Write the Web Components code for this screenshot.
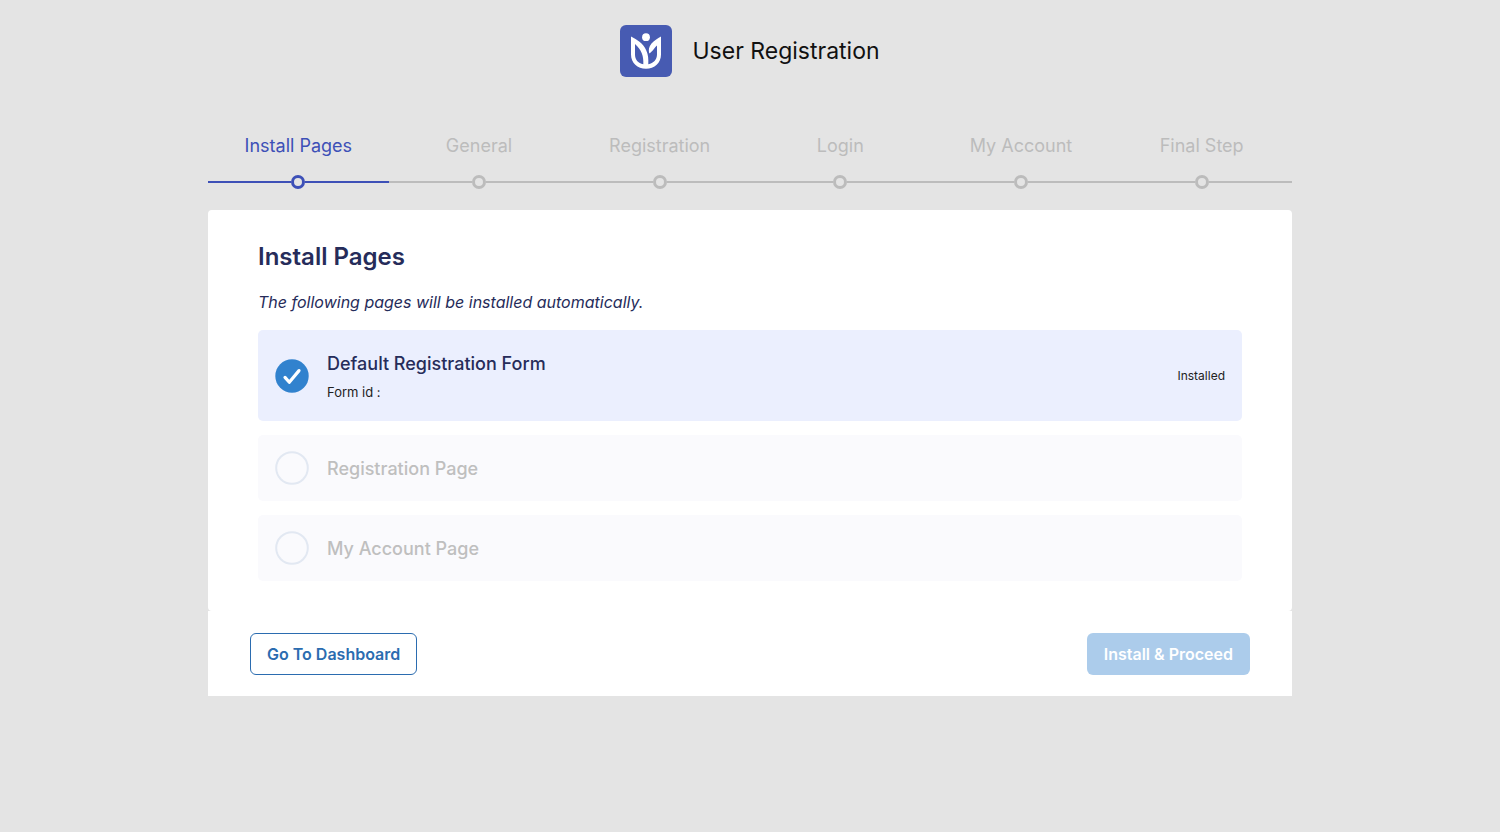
<!DOCTYPE html>
<html lang="en">
<head>
<meta charset="utf-8">
<meta name="viewport" content="width=device-width, initial-scale=1">
<title>User Registration</title>
<style>
  body {
    margin: 0;
    background: #e4e4e4;
    font-family: Inter, "Liberation Sans", sans-serif;
    --brand: #475bb2;
    --active: #3d50b7;
    --muted: #bcbcbc;
    --ink: #262c5a;
    --link: #2b6cb0;
  }
</style>
</head>
<body>
<setup-wizard>
  <brand-header slot="header">User Registration</brand-header>
  <step-list slot="steps">
    <step-item active>Install Pages</step-item>
    <step-item>General</step-item>
    <step-item>Registration</step-item>
    <step-item>Login</step-item>
    <step-item>My Account</step-item>
    <step-item>Final Step</step-item>
  </step-list>
  <install-panel>
    <span slot="title">Install Pages</span>
    <span slot="description">The following pages will be installed automatically.</span>
    <page-row done>Default Registration Form<span slot="detail">Form id :</span><span slot="status">Installed</span></page-row>
    <page-row>Registration Page</page-row>
    <page-row>My Account Page</page-row>
  </install-panel>
  <wizard-actions slot="actions">
    <wizard-button variant="outline">Go To Dashboard</wizard-button>
    <wizard-button disabled>Install &amp; Proceed</wizard-button>
  </wizard-actions>
</setup-wizard>

<script>
const define = (name, html, setup) => {
  const template = document.createElement('template');
  template.innerHTML = html;
  customElements.define(name, class extends HTMLElement {
    constructor() {
      super();
      this.attachShadow({ mode: 'open' }).append(template.content.cloneNode(true));
    }
    connectedCallback() { if (setup) setup(this, this.shadowRoot); }
  });
};

define('setup-wizard', `
  <style>
    :host { display: block; padding: 25px 16px 40px; }
    main { max-width: 1084px; margin: 0 auto; }
  </style>
  <slot name="header"></slot>
  <main>
    <slot name="steps"></slot>
    <slot></slot>
    <slot name="actions"></slot>
  </main>`);

define('brand-header', `
  <style>
    :host { display: block; }
    header { display: flex; align-items: center; justify-content: center; gap: 20px; }
    svg { width: 52px; height: 52px; flex: none; }
    h1 { margin: 0; font-size: 23px; line-height: 32px; font-weight: 400; color: #111; }
  </style>
  <header>
    <svg viewBox="0 0 52 52" aria-hidden="true">
      <rect width="52" height="52" rx="6" fill="var(--brand)"/>
      <circle cx="26" cy="12.2" r="3.9" fill="#fff"/>
      <path fill="#fff" fill-rule="evenodd" d="M11 11.500C17 14.500 23.500 18.500 26.300 25.500C28.300 30 28.500 34 28.300 39.300C33.500 38.300 37 34.500 37 29.500V20.500C34.800 22 33.500 25.800 29.300 28.500C28.300 25.500 28.800 21.500 31.500 18.500C34 15.500 37.500 13.500 41 11.500V29.500C41 38 34.500 43.700 26 43.700S11 38 11 29.500ZM15 19V29.500C15 34.500 18 38.300 23.300 39.300C23.800 31 21.500 25 15 19Z"/>
    </svg>
    <h1><slot></slot></h1>
  </header>`);

define('step-list', `
  <style>
    :host { display: block; padding: 57px 0 21px; }
    nav { display: grid; grid-auto-flow: column; grid-auto-columns: 1fr; }
  </style>
  <nav role="list" aria-label="Setup steps"><slot></slot></nav>`);

define('step-item', `
  <style>
    :host { display: block; color: var(--muted); font-size: 18px; line-height: 24px; text-align: center; }
    :host([active]) { color: var(--active); }
    .track { display: flex; align-items: center; margin-top: 17px; }
    .track::before, .track::after { content: ""; flex: 1; height: 2px; background: currentColor; }
    .dot { box-sizing: border-box; width: 14px; height: 14px; border: 3px solid; border-radius: 50%; }
  </style>
  <slot></slot>
  <div class="track"><span class="dot"></span></div>`,
  (host) => {
    host.setAttribute('role', 'listitem');
    if (host.hasAttribute('active')) host.setAttribute('aria-current', 'step');
  });

define('install-panel', `
  <style>
    :host { display: block; background: #fff; border-radius: 4px; padding: 30px 50px; color: var(--ink); }
    h2 { margin: 0 0 14px; font-size: 24px; line-height: 34px; font-weight: 600; }
    p { margin: 0 0 14px; font-size: 16px; line-height: 28px; font-style: italic; }
    .rows { display: grid; gap: 14px; }
  </style>
  <h2><slot name="title"></slot></h2>
  <p><slot name="description"></slot></p>
  <div class="rows" role="list"><slot></slot></div>`);

define('page-row', `
  <style>
    :host { display: flex; align-items: center; gap: 18px; padding: 16px 17px; border-radius: 5px;
            background: #fafafd; color: #bfbfbf; }
    :host([done]) { background: #ebeffe; color: var(--ink); padding-block: 20px; }
    svg { width: 34px; height: 34px; flex: none; }
    .on, :host([done]) .off { display: none; }
    :host([done]) .on { display: block; }
    .text { flex: 1; font-size: 18px; line-height: 27px; font-weight: 500; }
    .detail, .status { display: none; font-weight: 400; color: #222; }
    :host([done]) .detail { display: block; font-size: 13px; line-height: 18px; margin-top: 6px; }
    :host([done]) .status { display: block; font-size: 12px; line-height: 18px; }
  </style>
  <svg class="off" viewBox="0 0 34 34" aria-hidden="true"><circle cx="17" cy="17" r="15.800" fill="none" stroke="#e2e8f2" stroke-width="2"/></svg>
  <svg class="on" viewBox="0 0 34 34" aria-hidden="true"><circle cx="17" cy="17" r="16.700" fill="#3182ce"/><path d="M10 18.400L14.300 23.200L24 11.600" fill="none" stroke="#fff" stroke-width="3.200" stroke-linecap="round" stroke-linejoin="round"/></svg>
  <div class="text"><slot></slot><div class="detail"><slot name="detail"></slot></div></div>
  <div class="status"><slot name="status"></slot></div>`,
  (host) => host.setAttribute('role', 'listitem'));

define('wizard-actions', `
  <style>
    :host { display: flex; flex-wrap: wrap; justify-content: space-between; gap: 16px; padding: 22px 42px 21px; background: #fff; }
  </style>
  <slot></slot>`);

define('wizard-button', `
  <style>
    :host { display: block; }
    button { display: block; box-sizing: border-box; margin: 0; padding: 8px 16px; border: 1px solid transparent;
             border-radius: 6px; background: #3182ce; color: #fff; cursor: pointer;
             font: 600 16px/24px Inter, "Liberation Sans", sans-serif; }
    button:disabled { opacity: .4; cursor: not-allowed; }
    :host([variant="outline"]) button { background: transparent; border-color: var(--link); color: var(--link); }
  </style>
  <button type="button"><slot></slot></button>`,
  (host, root) => { root.querySelector('button').disabled = host.hasAttribute('disabled'); });
</script>
</body>
</html>
